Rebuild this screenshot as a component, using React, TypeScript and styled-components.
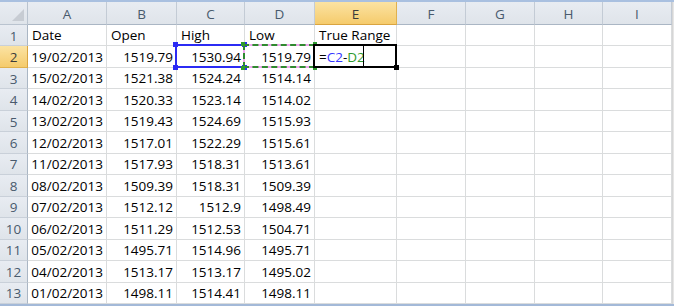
import React from "react";
import styled, { createGlobalStyle, css } from "styled-components";

const Global = createGlobalStyle`
  html, body { margin: 0; padding: 0; background: #ffffff; }
  body { font-family: "Open Sans", "Liberation Sans", sans-serif; }
`;

const COLS = [28, 79, 70, 68, 70, 82, 69, 69, 68, 69];
const LETTERS = ["A", "B", "C", "D", "E", "F", "G", "H", "I"];
const GRID = "#dadcdd";

const Window = styled.div`
  width: 674px;
  height: 306px;
  box-sizing: border-box;
  border-top: 2px solid #a9c0e0;
  border-bottom: 2px solid #a3b9d8;
  display: flex;
  overflow: hidden;
  background: #fff;
`;

const Sheet = styled.div`
  flex: 1;
  display: grid;
  grid-template-columns: ${COLS.map((c) => c + "px").join(" ")};
  grid-template-rows: 23px repeat(13, 1fr);
`;

const ScrollEdge = styled.div`
  width: 2px;
  background: #e6e6e6;
  border-left: 1px solid #d6d6d6;
`;

const headerBg = css<{ $active?: boolean }>`
  background: ${(p) =>
    p.$active
      ? "linear-gradient(#fbe3a3, #f5cb6c)"
      : "linear-gradient(#e8ecf2, #dfe4ea)"};
  color: ${(p) => (p.$active ? "#3b3b3b" : "#495a6d")};
`;

const Corner = styled.div`
  position: relative;
  background: linear-gradient(#e8ecf2, #dfe4ea);
  border-right: 1px solid #b9c3cf;
  border-bottom: 1px solid #b9c3cf;
  box-sizing: border-box;
  &::after {
    content: "";
    position: absolute;
    right: 3px;
    bottom: 3px;
    width: 0;
    height: 0;
    border-left: 12px solid transparent;
    border-bottom: 12px solid #c7ccd3;
  }
`;

const ColHeader = styled.div<{ $active?: boolean }>`
  ${headerBg};
  border-right: 1px solid ${(p) => (p.$active ? "#e0b14e" : "#c3cbd5")};
  border-bottom: 1px solid ${(p) => (p.$active ? "#d9a440" : "#aab6c4")};
  box-sizing: border-box;
  display: flex;
  align-items: center;
  justify-content: center;
  font-size: 13.5px;
  padding-top: 1px;
`;

const RowHeader = styled.div<{ $active?: boolean }>`
  ${headerBg};
  border-right: 1px solid ${(p) => (p.$active ? "#d9a440" : "#aab6c4")};
  border-bottom: 1px solid ${(p) => (p.$active ? "#e0b14e" : "#c9d0d9")};
  box-sizing: border-box;
  display: flex;
  align-items: center;
  justify-content: center;
  font-size: 13.5px;
  padding-top: 1px;
`;

const Cell = styled.div<{ $align?: "left" | "right" }>`
  position: relative;
  box-sizing: border-box;
  border-right: 1px solid ${GRID};
  border-bottom: 1px solid ${GRID};
  display: flex;
  align-items: flex-end;
  justify-content: ${(p) => (p.$align === "right" ? "flex-end" : "flex-start")};
  padding: 0 3px 1px 4px;
  font-size: 13.5px;
  line-height: 18px;
  color: #000;
  white-space: nowrap;
  overflow: visible;
`;

const Frame = styled.div<{ $kind: "blue" | "green" | "active" }>`
  position: absolute;
  top: -2px;
  left: -2px;
  right: -1px;
  bottom: -1px;
  z-index: 2;
  pointer-events: none;
  ${(p) =>
    p.$kind === "blue"
      ? css`
          border: 2px solid #2b2bf4;
        `
      : p.$kind === "green"
      ? css`
          border: 2px solid #f0a6ee;
          &::before {
            content: "";
            position: absolute;
            inset: -2px;
            border: 2px dashed #2f8a2f;
          }
        `
      : css`
          border: 2px solid #000;
          z-index: 3;
        `}
`;

const Handle = styled.span<{ $pos: "tl" | "tr" | "bl" | "br"; $color: string; $size?: number }>`
  position: absolute;
  width: ${(p) => p.$size ?? 5}px;
  height: ${(p) => p.$size ?? 5}px;
  background: ${(p) => p.$color};
  z-index: 4;
  ${(p) => (p.$pos[0] === "t" ? "top: -4px;" : "bottom: -4px;")}
  ${(p) => (p.$pos[1] === "l" ? "left: -4px;" : "right: -4px;")}
`;

const Ref = styled.span<{ $color: string }>`
  color: ${(p) => p.$color};
`;

const Caret = styled.span`
  position: absolute;
  left: 48px;
  top: 0;
  bottom: 0;
  width: 1px;
  background: #000;
`;

type Row = [string, string, string, string];
const DATA: Row[] = [
  ["19/02/2013", "1519.79", "1530.94", "1519.79"],
  ["15/02/2013", "1521.38", "1524.24", "1514.14"],
  ["14/02/2013", "1520.33", "1523.14", "1514.02"],
  ["13/02/2013", "1519.43", "1524.69", "1515.93"],
  ["12/02/2013", "1517.01", "1522.29", "1515.61"],
  ["11/02/2013", "1517.93", "1518.31", "1513.61"],
  ["08/02/2013", "1509.39", "1518.31", "1509.39"],
  ["07/02/2013", "1512.12", "1512.9", "1498.49"],
  ["06/02/2013", "1511.29", "1512.53", "1504.71"],
  ["05/02/2013", "1495.71", "1514.96", "1495.71"],
  ["04/02/2013", "1513.17", "1513.17", "1495.02"],
  ["01/02/2013", "1498.11", "1514.41", "1498.11"],
];

const HEAD = ["Date", "Open", "High", "Low", "True Range"];

export default function App() {
  const cells: React.ReactNode[] = [];
  cells.push(<Corner key="corner" />);
  LETTERS.forEach((l) =>
    cells.push(
      <ColHeader key={"h" + l} $active={l === "E"}>
        {l}
      </ColHeader>
    )
  );

  // row 1
  cells.push(<RowHeader key="r1">1</RowHeader>);
  for (let c = 0; c < 9; c++) {
    cells.push(<Cell key={"1-" + c}>{HEAD[c] ?? ""}</Cell>);
  }

  DATA.forEach((row, i) => {
    const r = i + 2;
    cells.push(
      <RowHeader key={"r" + r} $active={r === 2}>
        {r}
      </RowHeader>
    );
    for (let c = 0; c < 9; c++) {
      const key = r + "-" + c;
      if (c < 4) {
        cells.push(
          <Cell key={key} $align="right">
            {row[c]}
            {r === 2 && c === 2 && (
              <Frame $kind="blue">
                <Handle $pos="tl" $color="#2b2bf4" />
                <Handle $pos="tr" $color="#2b2bf4" />
                <Handle $pos="bl" $color="#2b2bf4" />
                <Handle $pos="br" $color="#2b2bf4" />
              </Frame>
            )}
            {r === 2 && c === 3 && (
              <Frame $kind="green">
                <Handle $pos="tl" $color="#2f9a2f" $size={4} />
                <Handle $pos="tr" $color="#2f9a2f" $size={4} />
                <Handle $pos="bl" $color="#2f9a2f" $size={4} />
                <Handle $pos="br" $color="#2f9a2f" $size={4} />
              </Frame>
            )}
          </Cell>
        );
      } else if (r === 2 && c === 4) {
        cells.push(
          <Cell key={key}>
            =<Ref $color="#3535ff">C2</Ref>-<Ref $color="#2f9a2f">D2</Ref>
            <Caret />
            <Frame $kind="active">
              <Handle $pos="br" $color="#000" />
            </Frame>
          </Cell>
        );
      } else {
        cells.push(<Cell key={key} />);
      }
    }
  });

  return (
    <>
      <Global />
      <Window>
        <Sheet>{cells}</Sheet>
        <ScrollEdge />
      </Window>
    </>
  );
}
